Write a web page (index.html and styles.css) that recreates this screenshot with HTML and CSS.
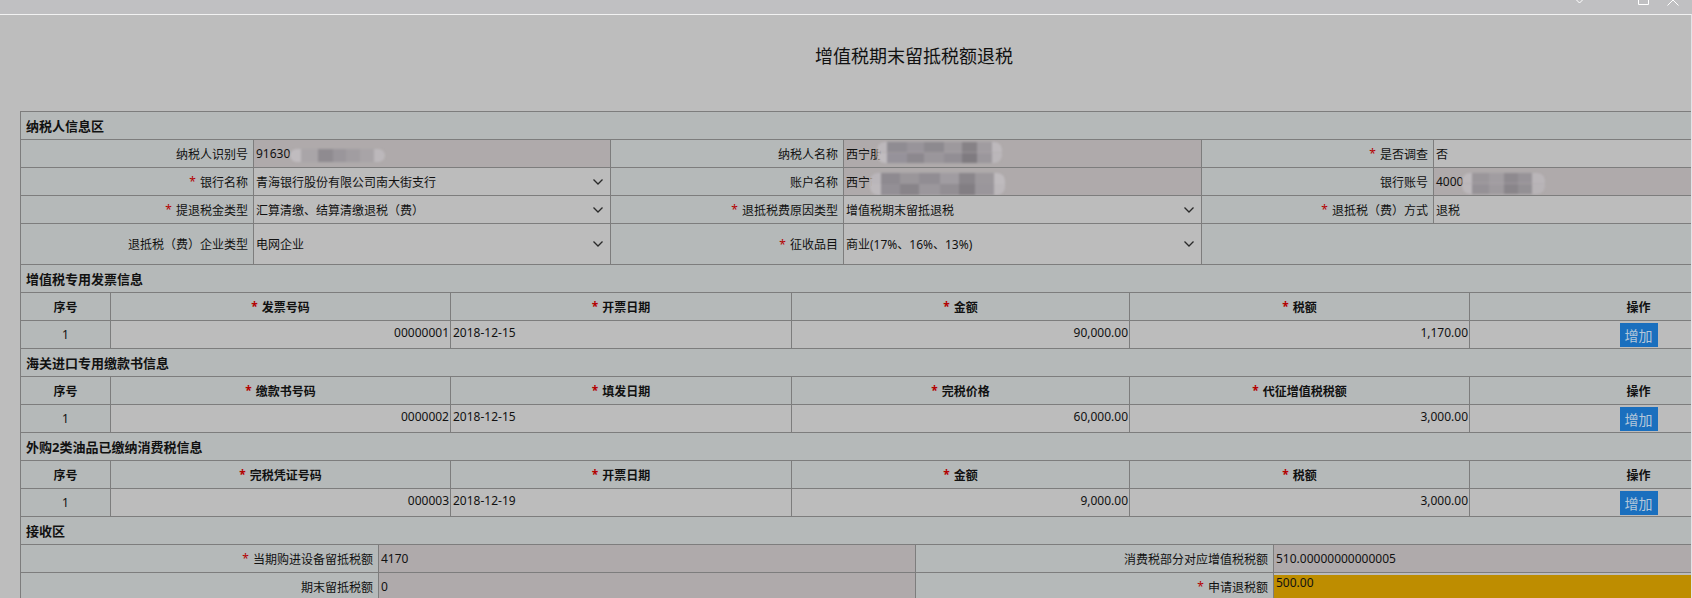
FILE: index.html
```html
<!DOCTYPE html>
<html lang="zh-CN">
<head>
    <meta charset="UTF-8">
    <meta name="viewport" content="width=device-width, initial-scale=1.0">
    <title>增值税期末留抵税额退税</title>
    <link rel="stylesheet" href="styles.css">
</head>
<body>
    <!-- 窗口标题栏 -->
    <div class="titlebar">
        <svg class="win-icon ico-menu" width="7" height="4" viewBox="0 0 7 4"><polyline points="0.5,0 3.5,3 6.5,0"/></svg>
        <svg class="win-icon ico-max" width="11" height="5" viewBox="0 0 11 5"><path d="M0.5 0V4.5H10.5V0"/></svg>
        <svg class="win-icon ico-close" width="12" height="6" viewBox="0 0 12 6"><polyline points="0.5,5.5 6,0 11.5,5.5"/></svg>
    </div>

    <div class="frame">
        <div class="page">
            <h2 class="page-title">增值税期末留抵税额退税</h2>

            <div class="sheet">
                <!-- 纳税人信息区 -->
                <div class="row sec"><div class="cell">纳税人信息区</div></div>
                <div class="row r-info">
                    <div class="cell lbl">纳税人识别号</div>
                    <div class="cell val ro masked">91630<i class="mosaic mz-id"></i></div>
                    <div class="cell lbl">纳税人名称</div>
                    <div class="cell val ro masked">西宁朋<i class="mosaic mz-name"></i></div>
                    <div class="cell lbl"><em class="req">*</em>是否调查</div>
                    <div class="cell val">否</div>
                </div>
                <div class="row r-info">
                    <div class="cell lbl"><em class="req">*</em>银行名称</div>
                    <div class="cell val sel"><span>青海银行股份有限公司南大街支行</span><svg class="arrow" width="10" height="6" viewBox="0 0 10 6"><polyline points="0.5,0.5 5,5 9.5,0.5"/></svg></div>
                    <div class="cell lbl">账户名称</div>
                    <div class="cell val ro masked">西宁市<i class="mosaic mz-acct"></i></div>
                    <div class="cell lbl">银行账号</div>
                    <div class="cell val ro masked">4000<i class="mosaic mz-bank"></i></div>
                </div>
                <div class="row r-info">
                    <div class="cell lbl"><em class="req">*</em>提退税金类型</div>
                    <div class="cell val sel"><span>汇算清缴、结算清缴退税（费）</span><svg class="arrow" width="10" height="6" viewBox="0 0 10 6"><polyline points="0.5,0.5 5,5 9.5,0.5"/></svg></div>
                    <div class="cell lbl"><em class="req">*</em>退抵税费原因类型</div>
                    <div class="cell val sel"><span>增值税期末留抵退税</span><svg class="arrow" width="10" height="6" viewBox="0 0 10 6"><polyline points="0.5,0.5 5,5 9.5,0.5"/></svg></div>
                    <div class="cell lbl"><em class="req">*</em>退抵税（费）方式</div>
                    <div class="cell val">退税</div>
                </div>
                <div class="row r-info tall">
                    <div class="cell lbl">退抵税（费）企业类型</div>
                    <div class="cell val sel"><span>电网企业</span><svg class="arrow" width="10" height="6" viewBox="0 0 10 6"><polyline points="0.5,0.5 5,5 9.5,0.5"/></svg></div>
                    <div class="cell lbl"><em class="req">*</em>征收品目</div>
                    <div class="cell val sel"><span>商业(17%、16%、13%)</span><svg class="arrow" width="10" height="6" viewBox="0 0 10 6"><polyline points="0.5,0.5 5,5 9.5,0.5"/></svg></div>
                    <div class="cell lbl span2"></div>
                </div>

                <!-- 增值税专用发票信息 -->
                <div class="row sec"><div class="cell">增值税专用发票信息</div></div>
                <div class="row r-bill head">
                    <div class="cell">序号</div>
                    <div class="cell"><em class="req">*</em>发票号码</div>
                    <div class="cell"><em class="req">*</em>开票日期</div>
                    <div class="cell"><em class="req">*</em>金额</div>
                    <div class="cell"><em class="req">*</em>税额</div>
                    <div class="cell">操作</div>
                </div>
                <div class="row r-bill data">
                    <div class="cell no">1</div>
                    <div class="cell inp num">00000001</div>
                    <div class="cell inp">2018-12-15</div>
                    <div class="cell inp num">90,000.00</div>
                    <div class="cell inp num">1,170.00</div>
                    <div class="cell op"><button class="btn-add">增加</button></div>
                </div>

                <!-- 海关进口专用缴款书信息 -->
                <div class="row sec"><div class="cell">海关进口专用缴款书信息</div></div>
                <div class="row r-bill head">
                    <div class="cell">序号</div>
                    <div class="cell"><em class="req">*</em>缴款书号码</div>
                    <div class="cell"><em class="req">*</em>填发日期</div>
                    <div class="cell"><em class="req">*</em>完税价格</div>
                    <div class="cell"><em class="req">*</em>代征增值税税额</div>
                    <div class="cell">操作</div>
                </div>
                <div class="row r-bill data">
                    <div class="cell no">1</div>
                    <div class="cell inp num">0000002</div>
                    <div class="cell inp">2018-12-15</div>
                    <div class="cell inp num">60,000.00</div>
                    <div class="cell inp num">3,000.00</div>
                    <div class="cell op"><button class="btn-add">增加</button></div>
                </div>

                <!-- 外购2类油品已缴纳消费税信息 -->
                <div class="row sec"><div class="cell">外购2类油品已缴纳消费税信息</div></div>
                <div class="row r-bill head">
                    <div class="cell">序号</div>
                    <div class="cell"><em class="req">*</em>完税凭证号码</div>
                    <div class="cell"><em class="req">*</em>开票日期</div>
                    <div class="cell"><em class="req">*</em>金额</div>
                    <div class="cell"><em class="req">*</em>税额</div>
                    <div class="cell">操作</div>
                </div>
                <div class="row r-bill data">
                    <div class="cell no">1</div>
                    <div class="cell inp num">000003</div>
                    <div class="cell inp">2018-12-19</div>
                    <div class="cell inp num">9,000.00</div>
                    <div class="cell inp num">3,000.00</div>
                    <div class="cell op"><button class="btn-add">增加</button></div>
                </div>

                <!-- 接收区 -->
                <div class="row sec"><div class="cell">接收区</div></div>
                <div class="row r-recv">
                    <div class="cell lbl"><em class="req">*</em>当期购进设备留抵税额</div>
                    <div class="cell val ro">4170</div>
                    <div class="cell lbl">消费税部分对应增值税税额</div>
                    <div class="cell val ro">510.00000000000005</div>
                </div>
                <div class="row r-recv">
                    <div class="cell lbl">期末留抵税额</div>
                    <div class="cell val ro">0</div>
                    <div class="cell lbl"><em class="req">*</em>申请退税额</div>
                    <div class="cell val apply"><div class="gold">500.00</div></div>
                </div>
            </div>
        </div>
    </div>
</body>
</html>
```

FILE: styles.css
```css
:root {
    --line: #7d7d7d;
    --page-bg: #bdbdbd;
    --label-bg: #b5b9b9;
    --input-bg: #bcbcbc;
    --readonly-bg: #afaaab;
    --req: #b40000;
}

* {
    box-sizing: border-box;
    margin: 0;
    padding: 0;
}

html, body {
    width: 1692px;
    height: 598px;
    overflow: hidden;
}

body {
    background: var(--page-bg);
    color: #111;
    font-family: "Noto Sans", "Noto Sans CJK SC", sans-serif;
    font-size: 12px;
}

/* 窗口标题栏 */
.titlebar {
    height: 14px;
    background: #c0c0c2;
    display: flex;
    align-items: flex-start;
    justify-content: flex-end;
    padding-right: 13px;
}

.win-icon {
    display: block;
    fill: none;
    stroke: #fff;
    stroke-width: 1;
}

.ico-menu { margin-right: 55px; }
.ico-max { margin-right: 18px; }

.frame {
    height: 584px;
    border-top: 1px solid #f2f2f2;
    border-right: 1px solid #e2e3e7;
    overflow: hidden;
}

.page {
    width: 1808px;
    padding-left: 20px;
}

.page-title {
    font-size: 18px;
    font-weight: normal;
    line-height: 22px;
    text-align: center;
    padding: 30px 0 44px;
    color: #111;
}

/* 表格区 */
.sheet {
    width: 1788px;
    border-left: 1px solid var(--line);
    border-top: 1px solid var(--line);
}

.row {
    display: grid;
    height: 28px;
}

.row.tall { height: 41px; }

.r-info { grid-template-columns: 233px 357px 233px 358px 232px 374px; }
.r-bill { grid-template-columns: 90px 340px 341px 338px 340px 338px; }
.r-recv { grid-template-columns: 358px 537px 358px 534px; }
.sec { grid-template-columns: 1fr; }

.cell {
    display: flex;
    align-items: center;
    min-width: 0;
    overflow: hidden;
    white-space: nowrap;
    border-right: 1px solid var(--line);
    border-bottom: 1px solid var(--line);
    background: var(--label-bg);
}

.sec .cell {
    font-size: 13px;
    font-weight: bold;
    padding-left: 5px;
}

.lbl {
    justify-content: flex-end;
    padding-right: 5px;
}

.span2 { grid-column: span 2; }

.val {
    background: var(--input-bg);
    padding-left: 2px;
}

.val.ro { background: var(--readonly-bg); }

.val.sel { padding-right: 7px; }
.val.sel .arrow {
    margin-left: auto;
    fill: none;
    stroke: #2a2a2a;
    stroke-width: 1.3;
}

.req {
    color: var(--req);
    font-style: normal;
    margin-right: 4px;
}

/* 明细表 */
.head .cell {
    justify-content: center;
    font-weight: bold;
}

.data .cell { background: var(--input-bg); }

.data .no { justify-content: center; background: var(--label-bg); }

.data .inp {
    padding: 0 2px 4px;
}

.data .num {
    justify-content: flex-end;
    padding-right: 1px;
}

.data .op { justify-content: center; }

.btn-add {
    width: 38px;
    height: 24px;
    border: none;
    background: #1a6fbe;
    color: #b4c7da;
    font-family: "Noto Sans CJK SC", sans-serif;
    font-size: 14px;
    line-height: 24px;
}

/* 接收区 */
.val.apply {
    align-items: stretch;
    padding: 2px 0 0;
}

.gold {
    flex: 1;
    background: #be8d00;
    padding-left: 2px;
    line-height: 16px;
}

/* 脱敏马赛克 */
.masked { position: relative; }

.mosaic {
    position: absolute;
    border-radius: 8px;
    filter: blur(1px);
}

.mz-id {
    left: 36px;
    top: 9px;
    width: 95px;
    height: 13px;
    background: linear-gradient(90deg, #c0bcbf 0 12%, #a9a5a8 12% 30%, #8f8b90 30% 45%, #9a969b 45% 59%, #a19da1 59% 74%, #a8a4a7 74% 88%, #bcb8bb 88%);
}

.mz-name {
    left: 33px;
    top: 2px;
    width: 125px;
    height: 21px;
    background:
        linear-gradient(90deg, #bcb8bb 0 8%, #8f8c92 8% 24%, #98949a 24% 38%, #8d8a8f 38% 54%, #9d999d 54% 68%, #868286 68% 80%, #a09ca0 80% 92%, #bdb9bc 92%) top / 100% 50% no-repeat,
        linear-gradient(90deg, #c0bcbf 0 8%, #96929a 8% 24%, #8c888e 24% 38%, #9a969b 38% 54%, #928e94 54% 68%, #7f7b80 68% 80%, #9b979c 80% 92%, #bbb7ba 92%) bottom / 100% 50% no-repeat;
}

.mz-acct {
    left: 26px;
    top: 5px;
    width: 135px;
    height: 22px;
    background:
        linear-gradient(90deg, #bab6ba 0 8%, #8e8a90 8% 22%, #9a969a 22% 36%, #918d93 36% 52%, #a09ca1 52% 66%, #8a868b 66% 78%, #9c989c 78% 92%, #bfbbbe 92%) top / 100% 50% no-repeat,
        linear-gradient(90deg, #bdb9bc 0 8%, #938f95 8% 22%, #888489 22% 36%, #9b979c 36% 52%, #928e93 52% 66%, #827e83 66% 78%, #9a969b 78% 92%, #bcb8bb 92%) bottom / 100% 50% no-repeat;
}

.mz-bank {
    left: 28px;
    top: 5px;
    width: 83px;
    height: 21px;
    background:
        linear-gradient(90deg, #bdb9bc 0 12%, #9a969a 12% 32%, #a19da1 32% 50%, #8e8a8f 50% 68%, #979398 68% 84%, #bab6b9 84%) top / 100% 50% no-repeat,
        linear-gradient(90deg, #bcb8bb 0 12%, #959196 12% 32%, #9e9a9e 32% 50%, #89858a 50% 68%, #939094 68% 84%, #b8b4b7 84%) bottom / 100% 50% no-repeat;
}
```
